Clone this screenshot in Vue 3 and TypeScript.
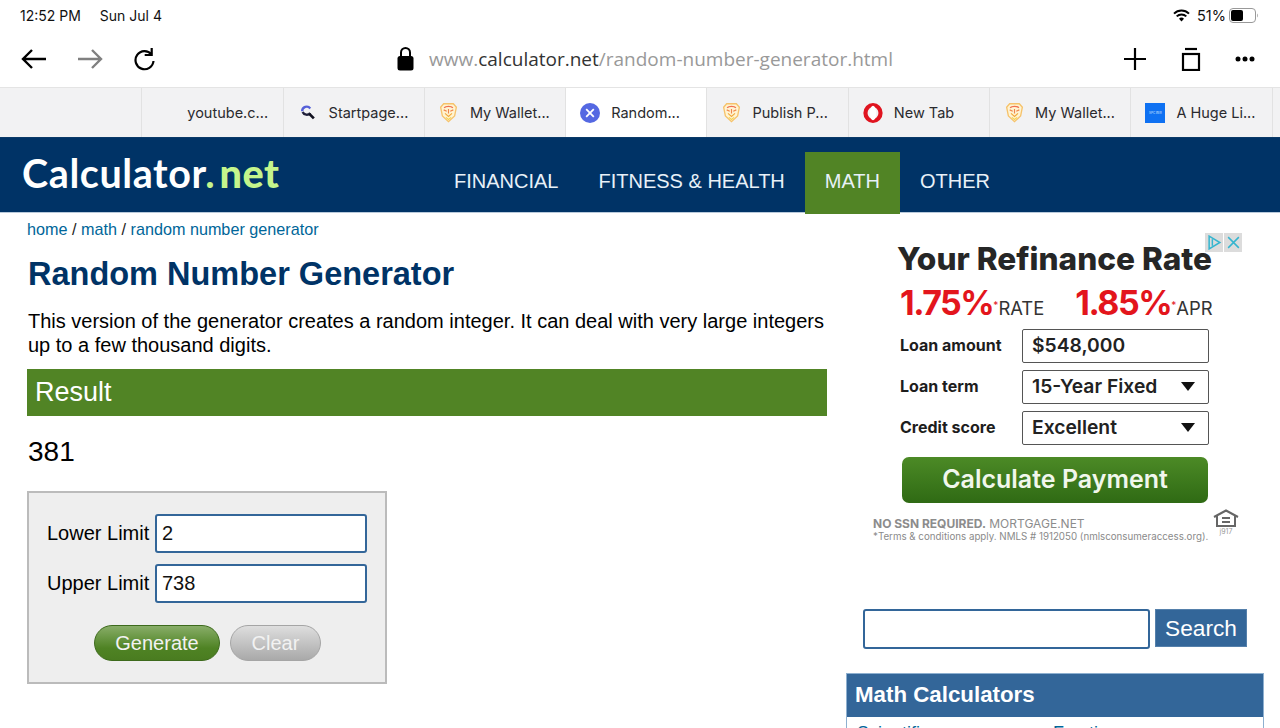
<script setup lang="ts">
type Tab = { title: string; icon: string; active?: boolean }

const tabs: Tab[] = [
  { title: '', icon: '' },
  { title: 'youtube.c...', icon: '' },
  { title: 'Startpage...', icon: 'search' },
  { title: 'My Wallet...', icon: 'lion' },
  { title: 'Random...', icon: 'close', active: true },
  { title: 'Publish P...', icon: 'lion' },
  { title: 'New Tab', icon: 'opera' },
  { title: 'My Wallet...', icon: 'lion' },
  { title: 'A Huge Li...', icon: 'blue' },
  { title: '', icon: '' },
]

const navItems = [
  { label: 'FINANCIAL', active: false },
  { label: 'FITNESS & HEALTH', active: false },
  { label: 'MATH', active: true },
  { label: 'OTHER', active: false },
]
</script>

<template>
  <div class="page">
    <div class="status">
      <div class="status-time"><span>12:52 PM</span><span>Sun Jul 4</span></div>
      <div class="status-right">
        <svg width="17" height="13" viewBox="0 0 17 13">
          <path d="M1 4.600a10.600 10.600 0 0 1 15 0" fill="none" stroke="#000" stroke-width="2" />
          <path d="M3.700 7.400a6.800 6.800 0 0 1 9.600 0" fill="none" stroke="#000" stroke-width="2" />
          <path d="M6 9.700a3.400 3.400 0 0 1 5 0l-2.500 2.800z" fill="#000" />
        </svg>
        <span class="battery-pct">51%</span>
        <svg width="30" height="15" viewBox="0 0 30 15">
          <rect x="0.500" y="0.500" width="26" height="14" rx="3.500" fill="none" stroke="#999" />
          <rect x="2" y="2" width="12" height="11" rx="2" fill="#000" />
          <path d="M28 5.500c1 .4 1 3.600 0 4z" fill="#999" />
        </svg>
      </div>
    </div>

    <div class="toolbar">
      <div class="tool-left">
        <svg width="26" height="22" viewBox="0 0 26 22" fill="none" stroke="#000" stroke-width="2.400">
          <path d="M25 11H2M11 2l-9 9 9 9" />
        </svg>
        <svg width="26" height="22" viewBox="0 0 26 22" fill="none" stroke="#808080" stroke-width="2.400">
          <path d="M1 11h23M15 2l9 9-9 9" />
        </svg>
        <svg width="22" height="24" viewBox="0 0 22 24" fill="none" stroke="#000" stroke-width="2.200">
          <path d="M18.500 7.500A9 9 0 1 0 20.500 14" />
          <path d="M18.700 1v7h-7" />
        </svg>
      </div>
      <div class="url">
        <svg width="17" height="25" viewBox="0 0 17 25">
          <path d="M4 11V6.500a4.500 4.500 0 0 1 9 0V11" fill="none" stroke="#000" stroke-width="2" />
          <rect x="0.500" y="10" width="16" height="14.500" rx="2.500" fill="#000" />
        </svg>
        <span class="url-text">www.<b>calculator.net</b>/random-number-generator.html</span>
      </div>
      <div class="tool-right">
        <svg width="24" height="24" viewBox="0 0 24 24" stroke="#000" stroke-width="2.200">
          <path d="M12 1v22M1 12h22" />
        </svg>
        <svg width="20" height="24" viewBox="0 0 20 24" fill="none" stroke="#000" stroke-width="2.200">
          <path d="M4 2h12" />
          <rect x="2" y="7" width="16" height="16" />
        </svg>
        <svg width="20" height="6" viewBox="0 0 20 6" fill="#000">
          <circle cx="3" cy="3" r="2.500" />
          <circle cx="10" cy="3" r="2.500" />
          <circle cx="17" cy="3" r="2.500" />
        </svg>
      </div>
    </div>

    <div class="tabs">
      <div v-for="(tab, i) in tabs" :key="i" class="tab" :class="{ active: tab.active }">
        <div v-if="tab.title" class="fav">
          <svg v-if="tab.icon === 'search'" width="18" height="18" viewBox="0 0 20 20" fill="none">
            <path d="M3.500 8a5 5 0 0 1 9-3" stroke="#5560d8" stroke-width="2.600" />
            <path d="M4 9a5 5 0 0 0 8.500 1" stroke="#20203a" stroke-width="2.600" />
            <path d="M11.500 11l5 5" stroke="#11111f" stroke-width="3" />
          </svg>
          <svg v-else-if="tab.icon === 'lion'" width="19" height="21" viewBox="0 0 20 24" fill="none">
            <path d="M4.500 2h11l3.500 4-2 10-7 6.500L3 16 1 6z" fill="#fff4d2" stroke="#f6c26a" stroke-width="1.500" />
            <path d="M5 6.500C7 4.500 13 4.500 15 6.500" stroke="#ef6f50" stroke-width="1.600" />
            <path d="M4.500 9l3.500 1.500M15.500 9L12 10.500M10 8v5" stroke="#f0864c" stroke-width="1.300" />
            <path d="M6 13l4 3.500 4-3.500" stroke="#f2a93c" stroke-width="1.300" />
            <path d="M7 17.500l3 2.500 3-2.500" stroke="#f3d354" stroke-width="1.300" />
          </svg>
          <svg v-else-if="tab.icon === 'close'" width="20" height="20" viewBox="0 0 20 20">
            <circle cx="10" cy="10" r="10" fill="#5468e2" />
            <path d="M6.200 6.200l7.600 7.600M13.800 6.200l-7.600 7.600" stroke="#fff" stroke-width="1.800" />
          </svg>
          <svg v-else-if="tab.icon === 'opera'" width="21" height="22" viewBox="0 0 22 22">
            <ellipse cx="11" cy="11" rx="8.300" ry="8.800" fill="none" stroke="#e0141f" stroke-width="4.600" />
            <ellipse cx="11" cy="11" rx="3.400" ry="8" fill="#fff" />
          </svg>
          <div v-else-if="tab.icon === 'blue'" class="fav-blue">SPC BER</div>
        </div>
        <span class="tab-title">{{ tab.title }}</span>
      </div>
    </div>

    <header class="site-header">
      <div class="logo">Calculator<span class="logo-dot">.</span> <span class="logo-net">net</span></div>
      <nav class="nav">
        <a v-for="item in navItems" :key="item.label" :class="{ current: item.active }">{{ item.label }}</a>
      </nav>
    </header>

    <main class="content">
      <section class="left">
        <div class="crumbs"><a>home</a> / <a>math</a> / <a>random number generator</a></div>
        <h1>Random Number Generator</h1>
        <p>This version of the generator creates a random integer. It can deal with very large integers up to a few thousand digits.</p>
        <div class="result-bar">Result</div>
        <div class="result-value">381</div>
        <form class="limits" @submit.prevent>
          <div class="field"><label>Lower Limit</label><input type="text" value="2" /></div>
          <div class="field"><label>Upper Limit</label><input type="text" value="738" /></div>
          <div class="buttons">
            <button class="btn generate">Generate</button>
            <button class="btn clear">Clear</button>
          </div>
        </form>
      </section>

      <aside class="right">
        <div class="ad">
          <div class="ad-badges">
            <span class="ad-badge">
              <svg width="15" height="15" viewBox="0 0 14 14" fill="none" stroke="#35b5cf" stroke-width="1.400"><path d="M2 1l10 6-10 6zM5 4v6" /></svg>
            </span>
            <span class="ad-badge">
              <svg width="15" height="15" viewBox="0 0 14 14" fill="none" stroke="#35b5cf" stroke-width="1.400"><path d="M2 2l10 10M12 2L2 12" /></svg>
            </span>
          </div>
          <div class="ad-title">Your Refinance Rate</div>
          <div class="ad-rates">
            <div><span class="rate">1.75%</span><sup>*</sup><span class="rate-unit">RATE</span></div>
            <div><span class="rate">1.85%</span><sup>*</sup><span class="rate-unit">APR</span></div>
          </div>
          <div class="ad-row"><span>Loan amount</span><div class="ad-box">$548,000</div></div>
          <div class="ad-row"><span>Loan term</span><div class="ad-box">15-Year Fixed<i class="caret"></i></div></div>
          <div class="ad-row"><span>Credit score</span><div class="ad-box">Excellent<i class="caret"></i></div></div>
          <div class="ad-cta">Calculate Payment</div>
          <div class="ad-foot">
            <div class="ad-legal">
              <div class="legal-top"><b>NO SSN REQUIRED.</b> MORTGAGE.NET</div>
              <div class="legal-small">*Terms &amp; conditions apply. NMLS # 1912050 (nmlsconsumeraccess.org).</div>
            </div>
            <div class="ad-house">
              <svg width="26" height="18" viewBox="0 0 26 18" fill="none" stroke="#666" stroke-width="2">
                <path d="M1 8l12-6.500L25 8M4 7v10h18V7M9 9h8M9 13h8" />
              </svg>
              <span>j917</span>
            </div>
          </div>
        </div>

        <div class="search">
          <input type="text" />
          <button>Search</button>
        </div>

        <div class="panel">
          <div class="panel-head">Math Calculators</div>
          <div class="panel-body"><a>Scientific</a><a>Fraction</a></div>
        </div>
      </aside>
    </main>
  </div>
</template>

<style>
html,
body {
  margin: 0;
  background: #fff;
}
</style>

<style scoped>
.page {
  width: 1280px;
  height: 728px;
  overflow: hidden;
  background: #fff;
  font-family: "Liberation Sans", Arial, sans-serif;
  color: #000;
}

.status {
  height: 30px;
  display: flex;
  justify-content: space-between;
  align-items: center;
  padding: 0 21px 0 20px;
  font-family: Inter, "Noto Sans", sans-serif;
  font-size: 14px;
  color: #111;
}

.status-time {
  display: flex;
  gap: 19px;
}

.status-right {
  display: flex;
  align-items: center;
  gap: 3px;
}

.battery-pct {
  margin-left: 4px;
  font-size: 14.500px;
}

.toolbar {
  height: 57px;
  box-sizing: border-box;
  display: grid;
  grid-template-columns: 380px 1fr auto;
  align-items: center;
  padding: 0 25px 0 21px;
}

.tool-left {
  display: flex;
  align-items: center;
  gap: 30px;
}

.tool-right {
  display: flex;
  align-items: center;
  gap: 34px;
}

.url {
  display: flex;
  align-items: center;
  gap: 15px;
  margin-left: -4px;
  font-family: "Open Sans", "Noto Sans", sans-serif;
  font-size: 19px;
  color: #999;
}

.url b {
  font-weight: 400;
  color: #333;
}

.tabs {
  height: 50px;
  box-sizing: border-box;
  display: grid;
  grid-template-columns: repeat(9, 141.300px) 1fr;
  background: #f2f2f3;
  border-top: 1px solid #e4e4e4;
  font-family: Inter, "Noto Sans", sans-serif;
  font-size: 14.500px;
  color: #2a2a2e;
}

.tab {
  display: flex;
  align-items: center;
  gap: 11px;
  padding-left: 14px;
  border-left: 1px solid #e2e2e2;
  box-sizing: border-box;
  overflow: hidden;
}

.tab:first-child {
  border-left: none;
}

.tab.active {
  background: #fff;
}

.tab-title {
  white-space: nowrap;
}

.fav {
  width: 20px;
  height: 22px;
  flex: none;
  display: flex;
  align-items: center;
  justify-content: center;
}

.fav-blue {
  width: 20px;
  height: 20px;
  background: #0f71f2;
  color: #cfe2ff;
  font-size: 3px;
  display: flex;
  align-items: center;
  justify-content: center;
  white-space: nowrap;
}

.site-header {
  height: 76px;
  box-sizing: border-box;
  background: #003366;
  border-top: 1px solid #0b3a68;
  border-bottom: 1px solid #b9cadb;
  display: flex;
  align-items: flex-start;
  padding-left: 22px;
}

.logo {
  width: 412px;
  margin-top: 12px;
  font-family: Lato, "Open Sans", sans-serif;
  font-weight: 700;
  font-size: 39.500px;
  letter-spacing: 0.6px;
  line-height: 46px;
  color: #fff;
  white-space: nowrap;
}

.logo-dot {
  color: #c5f58c;
}

.logo-net {
  color: #c5f58c;
  font-weight: 900;
  margin-left: -6px;
}

.nav {
  display: flex;
  margin-top: 14px;
}

.nav a {
  display: block;
  height: 62px;
  box-sizing: border-box;
  padding: 17px 20px 0;
  font-size: 20px;
  line-height: 24px;
  color: #e8f1f8;
  white-space: nowrap;
}

.nav a.current {
  background: #518425;
  position: relative;
  z-index: 1;
}

.content {
  display: flex;
  padding-left: 27px;
}

.left {
  width: 800px;
}

.crumbs {
  margin-top: 7px;
  font-size: 16.200px;
  line-height: 18px;
  color: #222;
}

.crumbs a {
  color: #006699;
}

h1 {
  margin: 16px 0 0;
  padding-left: 1px;
  font-size: 32.500px;
  line-height: 40px;
  font-weight: 700;
  color: #003366;
}

p {
  margin: 15px 0 0;
  font-size: 20px;
  line-height: 24px;
  padding-left: 1px;
}

.result-bar {
  margin-top: 12px;
  height: 47px;
  box-sizing: border-box;
  background: #518425;
  color: #fff;
  font-size: 27px;
  line-height: 46px;
  padding-left: 8px;
}

.result-value {
  margin-top: 19px;
  font-size: 28px;
  line-height: 34px;
  padding-left: 1px;
}

.limits {
  margin-top: 22px;
  width: 360px;
  height: 193px;
  box-sizing: border-box;
  background: #eeeeee;
  border: 2px solid #bbbbbb;
  padding: 21px 18px 0;
}

.field {
  display: flex;
  align-items: center;
  gap: 5px;
  height: 39px;
  margin-bottom: 11px;
  font-size: 20px;
}

.field label {
  width: 103px;
  flex: none;
  white-space: nowrap;
}

.field input {
  width: 212px;
  height: 39px;
  box-sizing: border-box;
  border: 2px solid #336699;
  border-radius: 3px;
  background: #fff;
  padding: 0 5px;
  font: 20px "Liberation Sans", Arial, sans-serif;
  color: #111;
  outline: none;
}

.buttons {
  display: flex;
  gap: 10px;
  margin: 22px 0 0 47px;
}

.btn {
  height: 36px;
  box-sizing: border-box;
  border-radius: 18px;
  font: 20px "Liberation Sans", Arial, sans-serif;
  color: #f2f2f2;
  padding: 0;
}

.generate {
  width: 126px;
  border: 1px solid #3d6a1c;
  background: linear-gradient(#88ad68, #4f8324 65%, #4a7c20);
}

.clear {
  width: 91px;
  border: 1px solid #a5a5a5;
  background: linear-gradient(#dedede, #a9a9a9);
}

.right {
  width: 418px;
  margin-left: 19px;
  flex: none;
}

.ad {
  position: relative;
  width: 369px;
  height: 318px;
  margin: 20px 0 0 27px;
  box-sizing: border-box;
  font-family: Inter, "Open Sans", sans-serif;
  color: #1c1c1c;
}

.ad-badges {
  position: absolute;
  top: 0;
  right: 0;
  display: flex;
  gap: 1px;
}

.ad-badge {
  width: 18px;
  height: 19px;
  background: #dcdcdc;
  display: flex;
  align-items: center;
  justify-content: center;
}

.ad-title {
  padding: 8px 0 0 24px;
  font-size: 31.600px;
  line-height: 36px;
  font-weight: 800;
  color: #262626;
  white-space: nowrap;
}

.ad-rates {
  display: flex;
  gap: 31px;
  padding: 6px 0 0 27px;
  line-height: 40px;
  white-space: nowrap;
}

.rate {
  color: #e3151c;
  font-size: 34px;
  font-weight: 700;
  letter-spacing: -1.500px;
}

.ad-rates sup {
  color: #e3151c;
  font-size: 10px;
  line-height: 0;
}

.rate-unit {
  color: #333;
  font-size: 18.400px;
  font-weight: 400;
}

.ad-row {
  display: flex;
  align-items: center;
  height: 34px;
  margin: 0 0 7px 27px;
  font-size: 16px;
  font-weight: 700;
  color: #1d1d1d;
}

.ad-row > span {
  width: 122px;
  flex: none;
  padding-bottom: 2px;
}

.ad-box {
  position: relative;
  width: 187px;
  height: 34px;
  box-sizing: border-box;
  border: 1.500px solid #555;
  border-radius: 2px;
  padding-left: 9px;
  font-size: 19.300px;
  font-weight: 600;
  line-height: 31px;
  color: #222;
}

.caret {
  position: absolute;
  right: 13px;
  top: 11px;
  width: 0;
  height: 0;
  border-left: 7px solid transparent;
  border-right: 7px solid transparent;
  border-top: 9px solid #111;
}

.ad-cta {
  width: 306px;
  height: 46px;
  margin: 12px 0 0 29px;
  border-radius: 7px;
  background: linear-gradient(#4c8a26, #2f6a14);
  color: #f1f7ec;
  font-size: 25px;
  font-weight: 600;
  line-height: 45px;
  text-align: center;
}

.ad-foot {
  display: flex;
  justify-content: space-between;
  margin-top: 14px;
  color: #8a8a8a;
}

.legal-top {
  font-size: 12px;
  line-height: 14px;
  color: #8c8c8c;
  white-space: nowrap;
}

.legal-small {
  font-size: 9.750px;
  line-height: 11px;
  white-space: nowrap;
}

.ad-house {
  display: flex;
  flex-direction: column;
  align-items: center;
  margin: -8px 3px 0 0;
  font-size: 7px;
  color: #999;
}

.search {
  display: flex;
  gap: 5px;
  margin: 58px 0 0 17px;
}

.search input {
  width: 287px;
  height: 40px;
  box-sizing: border-box;
  border: 2px solid #336699;
  border-radius: 3px;
  background: #fff;
  outline: none;
}

.search button {
  width: 92px;
  height: 38px;
  border: 1px solid #5580ab;
  background: #336699;
  color: #fff;
  font: 22.700px "Liberation Sans", Arial, sans-serif;
  padding: 0;
}

.panel {
  margin-top: 24px;
  border: 1px solid #8eb0d0;
  height: 70px;
  box-sizing: border-box;
}

.panel-head {
  height: 43px;
  background: #336699;
  color: #fff;
  font-size: 22.300px;
  font-weight: 700;
  line-height: 42px;
  padding-left: 8px;
}

.panel-body {
  display: flex;
  gap: 124px;
  padding: 6px 10px 0;
  font-size: 18px;
  line-height: 20px;
  color: #006699;
}
</style>
